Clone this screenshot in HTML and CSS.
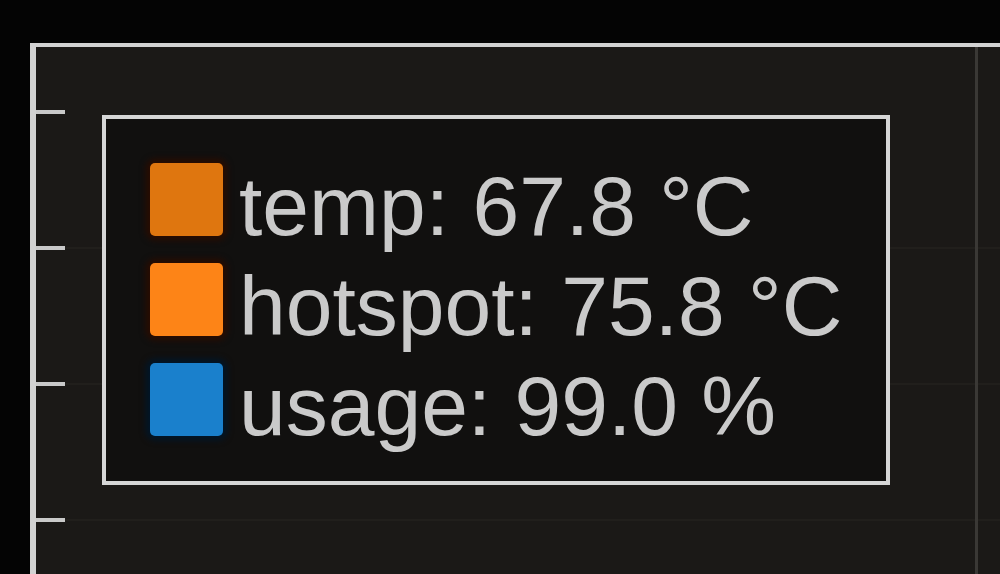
FILE: index.html
```html
<!DOCTYPE html>
<html lang="en">
<head>
    <meta charset="UTF-8">
    <title>GPU legend</title>
    <link rel="stylesheet" href="styles.css">
</head>
<body>
    <div class="plot">
        <!-- grid lines, then y-axis ticks on top -->
        <div class="grid-h" style="top: 200px"></div>
        <div class="grid-h" style="top: 336px"></div>
        <div class="grid-h" style="top: 472px"></div>
        <div class="grid-v"></div>
        <div class="tick" style="top: 63px"></div>
        <div class="tick" style="top: 199px"></div>
        <div class="tick" style="top: 335px"></div>
        <div class="tick" style="top: 471px"></div>

        <div class="legend">
            <div class="legend-row">
                <span class="swatch temp"></span>
                <span class="label">temp: 67.8 °C</span>
            </div>
            <div class="legend-row">
                <span class="swatch hotspot"></span>
                <span class="label">hotspot: 75.8 °C</span>
            </div>
            <div class="legend-row">
                <span class="swatch usage"></span>
                <span class="label">usage: 99.0 %</span>
            </div>
        </div>
    </div>
</body>
</html>
```

FILE: styles.css
```css
html, body {
    margin: 0;
    height: 100%;
    overflow: hidden;
}
body {
    background-color: #040404;
    font-family: "Liberation Sans", Arial, sans-serif;
    padding: 43px 0 0 30px;
    box-sizing: border-box;
}
.plot {
    position: relative;
    height: 100%;
    background-color: #1b1917;
    border-top: 4px solid #d2d2d2;
    border-left: 6px solid #d2d2d2;
    padding: 68px 0 0 66px;
    box-sizing: border-box;
}
.tick {
    position: absolute;
    left: 0;
    width: 29px;
    height: 4px;
    background-color: #c9c9c9;
}
.grid-h {
    position: absolute;
    left: 0;
    right: 0;
    height: 2px;
    background-color: #211f1c;
}
.grid-v {
    position: absolute;
    top: 0;
    bottom: 0;
    left: 939px;
    width: 3px;
    background-color: #3a3835;
}
.legend {
    position: relative;
    width: 788px;
    height: 370px;
    box-sizing: border-box;
    border: 4px solid #d6d6d6;
    background-color: #11100f;
    padding: 37px 0 0 44px;
}
.legend-row {
    display: flex;
    align-items: flex-start;
    gap: 16px;
    height: 100px;
}
.swatch {
    width: 73px;
    height: 73px;
    margin-top: 7px;
    border-radius: 5px;
    flex-shrink: 0;
}
.swatch.temp {
    background-color: #df760f;
    box-shadow: 0 0 6px 4px #2a0c00;
}
.swatch.hotspot {
    background-color: #fd8417;
    box-shadow: 0 0 6px 4px #2a0c00;
}
.swatch.usage {
    background-color: #1a80cc;
    box-shadow: 0 0 6px 4px #001629;
}
.label {
    color: #cacaca;
    font-size: 84px;
    line-height: 100px;
    white-space: nowrap;
}
```
